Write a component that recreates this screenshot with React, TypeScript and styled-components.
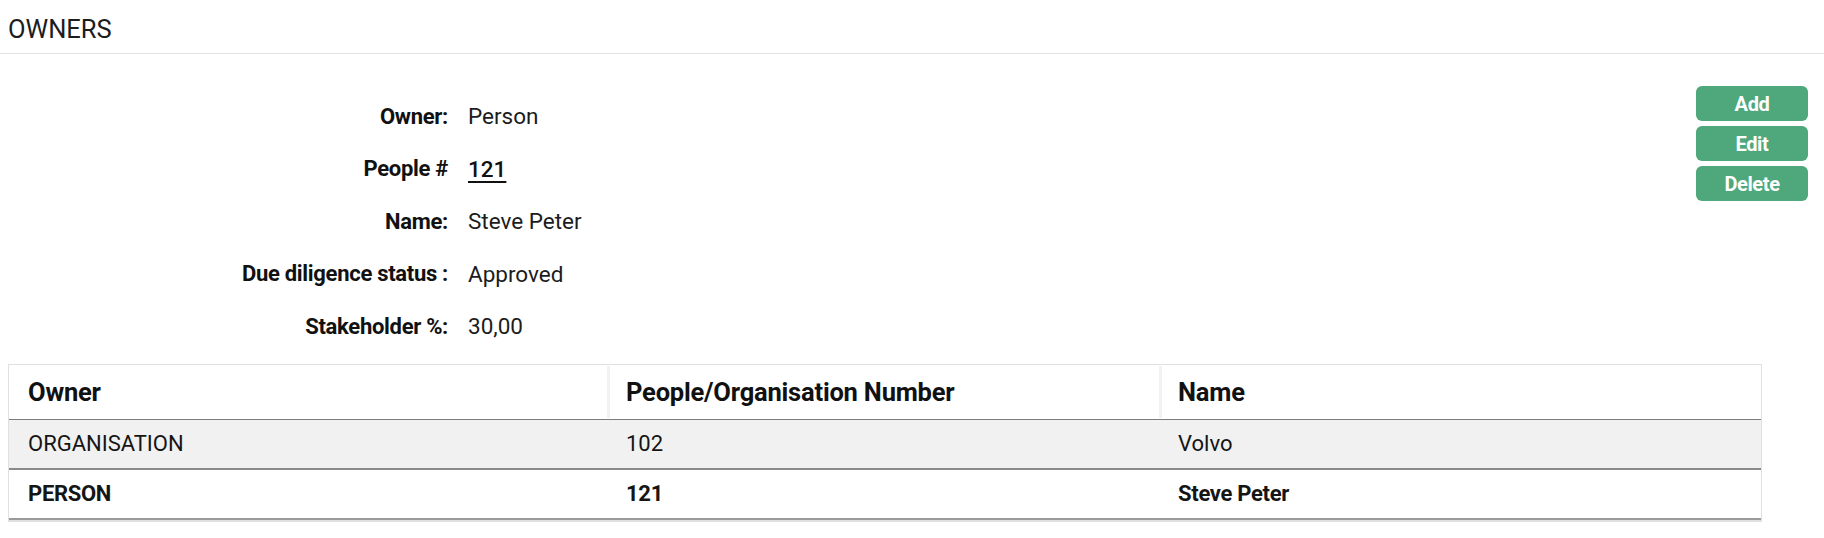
import React from "react";
import styled, { createGlobalStyle } from "styled-components";

const GlobalStyle = createGlobalStyle`
  html, body { margin: 0; padding: 0; background: #ffffff; }
  body {
    font-family: Roboto, "Noto Sans", "Liberation Sans", sans-serif;
    color: #1c1c1c;
  }
`;

const Page = styled.div`
  width: 1824px;
  min-height: 538px;
  background: #fff;
`;

const SectionHeader = styled.header`
  height: 53px;
  box-sizing: content-box;
  border-bottom: 1px solid #e2e2e2;
  display: flex;
  align-items: center;
  padding: 0 8px;
`;

const SectionTitle = styled.h2`
  margin: 4px 0 0;
  font-size: 25.5px;
  font-weight: 400;
  letter-spacing: 0;
  color: #1c1c1c;
`;

const Body = styled.div`
  padding: 0 16px 0 8px;
`;

const TopArea = styled.div`
  display: flex;
  justify-content: space-between;
  align-items: flex-start;
`;

const Details = styled.dl`
  margin: 0;
  padding-top: 36px;
  display: grid;
  grid-template-columns: 440px auto;
  grid-auto-rows: 52.5px;
  column-gap: 20px;
  align-items: center;
`;

const Label = styled.dt`
  text-align: right;
  font-size: 22px;
  font-weight: 700;
  letter-spacing: -0.3px;
  color: #111;
`;

const Value = styled.dd`
  margin: 0;
  font-size: 22.5px;
  font-weight: 400;
  color: #1c1c1c;
`;

const ValueLink = styled.a`
  color: #111;
  font-weight: 500;
  text-decoration: underline;
  text-underline-offset: 4px;
  text-decoration-thickness: 2px;
`;

const Actions = styled.div`
  display: flex;
  flex-direction: column;
  gap: 5px;
  padding-top: 32px;
`;

const ActionButton = styled.button`
  width: 112px;
  height: 35px;
  border: none;
  border-radius: 6px;
  background: #4ea87b;
  color: #fff;
  font-family: Roboto, "Noto Sans", sans-serif;
  font-size: 20px;
  font-weight: 700;
  letter-spacing: -0.4px;
  cursor: pointer;
  padding: 0;
`;

const Table = styled.div`
  margin-top: 11px;
  width: 1754px;
  border: 1px solid #e0e0e0;
  border-bottom-width: 2px;
  box-sizing: border-box;
`;

const Row = styled.div<{ $bg?: string; $line?: string }>`
  display: grid;
  grid-template-columns: 598px 552px 1fr;
  background: ${(p) => p.$bg || "#fff"};
  border-bottom: 2px solid ${(p) => p.$line || "#8a8a8a"};
`;

const HeadRow = styled(Row)`
  height: 55px;
  box-sizing: border-box;
  border-bottom: 1.5px solid #7d7d7d;
`;

const HeadCell = styled.div<{ $sep?: boolean }>`
  display: flex;
  align-items: center;
  padding-left: 16px;
  margin: 1px 0;
  border-left: 3px solid ${(p) => (p.$sep ? "#f2f2f2" : "transparent")};
  font-size: 25.5px;
  font-weight: 700;
  letter-spacing: -0.2px;
  color: #111;
`;

const Cell = styled.div<{ $bold?: boolean }>`
  display: flex;
  align-items: center;
  height: 48px;
  padding-left: 19px;
  font-size: 22px;
  font-weight: ${(p) => (p.$bold ? 700 : 400)};
  letter-spacing: ${(p) => (p.$bold ? "-0.3px" : "0")};
  color: #151515;
`;

const details: { label: string; value: string; link?: boolean }[] = [
  { label: "Owner:", value: "Person" },
  { label: "People #", value: "121", link: true },
  { label: "Name:", value: "Steve Peter" },
  { label: "Due diligence status :", value: "Approved" },
  { label: "Stakeholder %:", value: "30,00" },
];

const rows = [
  { owner: "ORGANISATION", number: "102", name: "Volvo", selected: false },
  { owner: "PERSON", number: "121", name: "Steve Peter", selected: true },
];

export default function App() {
  return (
    <Page>
      <GlobalStyle />
      <SectionHeader>
        <SectionTitle>OWNERS</SectionTitle>
      </SectionHeader>
      <Body>
        <TopArea>
          <Details>
            {details.map((d) => (
              <React.Fragment key={d.label}>
                <Label>{d.label}</Label>
                <Value>{d.link ? <ValueLink href="#">{d.value}</ValueLink> : d.value}</Value>
              </React.Fragment>
            ))}
          </Details>
          <Actions>
            <ActionButton>Add</ActionButton>
            <ActionButton>Edit</ActionButton>
            <ActionButton>Delete</ActionButton>
          </Actions>
        </TopArea>
        <Table>
          <HeadRow>
            <HeadCell>Owner</HeadCell>
            <HeadCell $sep>People/Organisation Number</HeadCell>
            <HeadCell $sep>Name</HeadCell>
          </HeadRow>
          {rows.map((r, i) => (
            <Row key={r.owner} $bg={i === 0 ? "#f1f1f1" : "#fff"} $line={i === 0 ? "#8a8a8a" : "#9a9a9a"}>
              <Cell $bold={r.selected}>{r.owner}</Cell>
              <Cell $bold={r.selected}>{r.number}</Cell>
              <Cell $bold={r.selected}>{r.name}</Cell>
            </Row>
          ))}
        </Table>
      </Body>
    </Page>
  );
}
